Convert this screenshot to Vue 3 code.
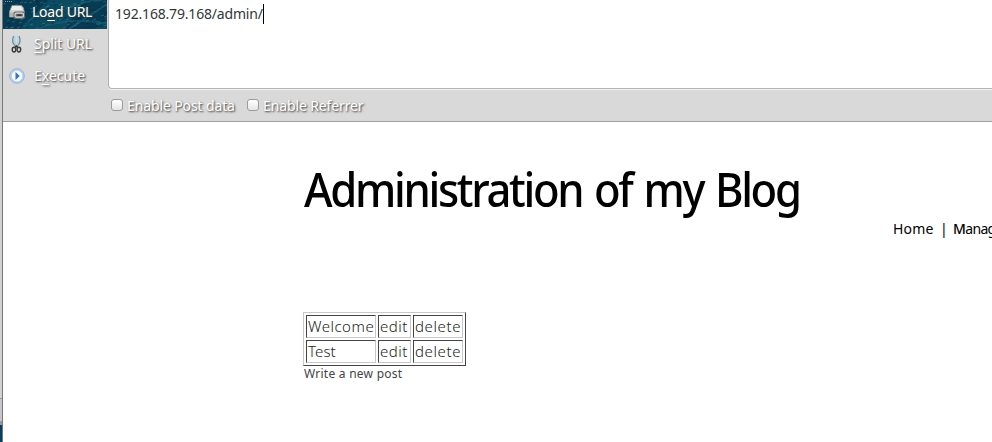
<script setup>
const rows = ['Welcome', 'Test']
const specks = Array.from({ length: 150 }, (_, i) => ({
  x: (i * 37 + (i * i) % 17) % 104,
  y: (i * 13 + (i * i) % 11) % 29,
  c: ['#2d7184', '#03334d', '#34788a', '#022840'][i % 4],
}))
</script>

<template>
  <div class="screen">
    <aside class="edge"><div class="edge-top"></div><div class="edge-tab"></div><div class="edge-gap"></div><div class="edge-sea"></div></aside>
    <div class="window">
      <header class="toolbar">
        <nav class="actions">
          <div class="action active">
            <svg class="water" width="104" height="29" viewBox="0 0 104 29">
              <rect width="104" height="29" fill="#0b4a60" />
              <path d="M0 0H45L18 29H0ZM83 0H104V20L92 29H62Z" fill="#073b53" />
              <path d="M32 29Q63 17 104 23M45 18Q67 2 99 0M66 29L104 4M22 24L49 3" stroke="#196177" stroke-width="2" fill="none" opacity=".7" />
              <path v-for="(s, i) in specks" :key="i" :d="`M${s.x} ${s.y}l3 -1`" :stroke="s.c" opacity=".65" />
              <path d="M2 1.5h8" stroke="#81a6af" stroke-dasharray="1 1" />
            </svg>
            <svg class="icon" width="18" height="18" viewBox="0 0 18 18">
              <path d="M4 2.500h9.500l2 2.500 1 5v4H1.500V8.500Z" fill="#d2d2d2" stroke="#999" stroke-width=".7" />
              <path d="M4.500 3h8.500l1.500 4H3Z" fill="#ececec" />
              <path d="M2 9.500h5v4H2Z" fill="#b5b5b5" />
              <rect x="5.500" y="8.500" width="11.500" height="7.500" rx="2" fill="#686868" />
              <rect x="7" y="10.200" width="8.500" height="4" rx="1.500" fill="none" stroke="#ddd" stroke-width="1.200" />
              <path d="M9.500 12.200h3.800" stroke="#333" stroke-width="1.600" />
            </svg>
            <span class="label load">Lo<u>a</u>d URL</span>
          </div>
          <div class="action">
            <svg class="icon" width="18" height="18" viewBox="0 0 18 18">
              <path d="M5.700 1Q4.300 3 5 8L8 11.500M11 1Q12.400 3 11.700 8L8.700 11.500" fill="none" stroke="#648b9b" stroke-width="1.300" />
              <path d="M6.900 1v7l1.300 3M9.800 1v7L8.600 11" fill="none" stroke="#a9d2e0" stroke-width="1.300" />
              <path d="M6.500 11.500l1.800-1.500 1.800 1.500-1.800 1.200Z" fill="#333" />
              <ellipse cx="6" cy="14.600" rx="1.800" ry="2.400" fill="none" stroke="#3b3b3b" stroke-width="1.400" />
              <ellipse cx="10.900" cy="14.600" rx="1.800" ry="2.400" fill="none" stroke="#3b3b3b" stroke-width="1.400" />
            </svg>
            <span class="label split"><u>S</u>plit URL</span>
          </div>
          <div class="action">
            <svg class="icon" width="18" height="18" viewBox="0 0 18 18">
              <circle cx="9" cy="9" r="7.300" fill="#b9d3f1" stroke="#8fb0d8" stroke-width=".9" />
              <circle cx="9" cy="9" r="5.200" fill="#f7fbff" />
              <path d="M7.500 5v8L11.700 9Z" fill="#2f73cf" />
            </svg>
            <span class="label execute">E<u>x</u>ecute</span>
          </div>
        </nav>
        <div class="fields">
          <div class="url"><span class="address">192.168.79.168/admin/</span><i class="caret"></i></div>
          <div class="options">
            <i class="check"></i><span class="label post">Enable Post data</span>
            <i class="check"></i><span class="label referrer">Enable Referrer</span>
          </div>
        </div>
      </header>
      <main class="page">
        <h1><span>Administration of my Blog</span></h1>
        <div class="menu"><span class="home">Home</span><span class="bar">|</span><span class="manage"><b>M</b>anag</span></div>
        <table>
          <tbody>
            <tr v-for="r in rows" :key="r">
              <td class="name"><span :class="r.toLowerCase()">{{ r }}</span></td>
              <td class="edit"><span>edit</span></td>
              <td class="delete"><span>delete</span></td>
            </tr>
          </tbody>
        </table>
        <div class="write"><span>Write a new post</span></div>
      </main>
    </div>
  </div>
</template>

<style>
body { margin: 0; overflow: hidden; }
</style>
<style scoped>
* { box-sizing: border-box; }
.screen { display: flex; width: 992px; height: 442px; overflow: hidden; background: #fff; font-family: "Noto Sans", sans-serif; }
span { white-space: nowrap; }
.edge { width: 3px; flex: none; display: flex; flex-direction: column; border-right: 1px solid #777; background: #ccc; }
.edge-top { height: 398px; background: #d2d2d2; }
.edge-tab { height: 23px; border-top: 1px solid #999; background: #c5c7cc; }
.edge-gap { height: 4px; background: #999; }
.edge-sea { flex: 1; background: #06405e; }
.window { width: 989px; flex: none; display: flex; flex-direction: column; }
.toolbar { height: 122px; flex: none; display: flex; background: #d9d9d9; border-bottom: 1px solid #a1a1a1; }
.actions { width: 104px; flex: none; display: flex; flex-direction: column; }
.action { height: 32px; display: flex; align-items: center; padding: 0 0 2px 5px; }
.action.active { height: 29px; position: relative; padding-bottom: 5px; }
.water { position: absolute; left: 0; top: 0; }
.icon { flex: none; position: relative; }
.label { color: #fff; font-size: 14px; line-height: 20px; text-shadow: 1px 1px 2px #333; }
.label u { text-decoration-thickness: 1px; text-underline-offset: 3px; }
.load { position: relative; margin-left: 6px; letter-spacing: -.25px; }
.split { margin-left: 8px; letter-spacing: -.05px; }
.execute { margin-left: 8px; }
.fields { flex: 1; display: flex; flex-direction: column; }
.url { height: 89px; margin-left: 1px; display: flex; padding: 4px 0 0 6px; background: #fff; border: solid #b2b2b2; border-width: 0 0 1px 1px; border-bottom-left-radius: 4px; box-shadow: 0 1px #f3f3f3; }
.address { font-size: 14px; line-height: 20px; color: #32373a; letter-spacing: -.18px; }
.caret { width: 1px; height: 20px; background: #000; }
.options { height: 32px; display: flex; align-items: center; padding: 0 0 0 4px; }
.check { width: 12px; height: 12px; flex: none; border: 1px solid #9b9b9b; border-radius: 3px; background: linear-gradient(#fff, #e5e5e5); }
.options .label { margin-left: 4px; padding-top: 1px; letter-spacing: -.12px; }
.options .post { width: 108px; margin-right: 12px; }
.page { flex: 1; padding: 39px 0 0 301px; }
h1 { margin: 0; height: 57px; font-size: 47px; line-height: 57px; font-weight: 500; color: #000; letter-spacing: -2.5px; word-spacing: 3px; }
h1 span { display: inline-block; transform: scaleX(.928); transform-origin: left; }
.menu { height: 20px; margin: 1px 0 0 589px; display: flex; font-size: 14px; line-height: 20px; color: #000; font-weight: 400; }
.home { width: 46px; flex: none; letter-spacing: .2px; }
.bar { width: 14px; flex: none; padding-left: 1px; }
.manage { letter-spacing: -.65px; }
.manage b { font-weight: 500; }
table { margin: 73px 0 0 -1px; width: 163px; height: 54px; border-spacing: 2px; border: 1px solid; border-color: #c8c8c8 #444 #444 #c8c8c8; color: #222; font-size: 15px; font-weight: 300; line-height: 21px; table-layout: fixed; letter-spacing: .5px; }
td { height: 23px; padding: 0 1px; border: 1px solid; border-color: #444 #c8c8c8 #c8c8c8 #444; }
.name { width: 70px; }
.edit { width: 33px; }
.delete { width: 50px; letter-spacing: .6px; }
.test { letter-spacing: .1px; }
.write { font-size: 12px; line-height: 15px; color: #444; letter-spacing: .25px; }
</style>
